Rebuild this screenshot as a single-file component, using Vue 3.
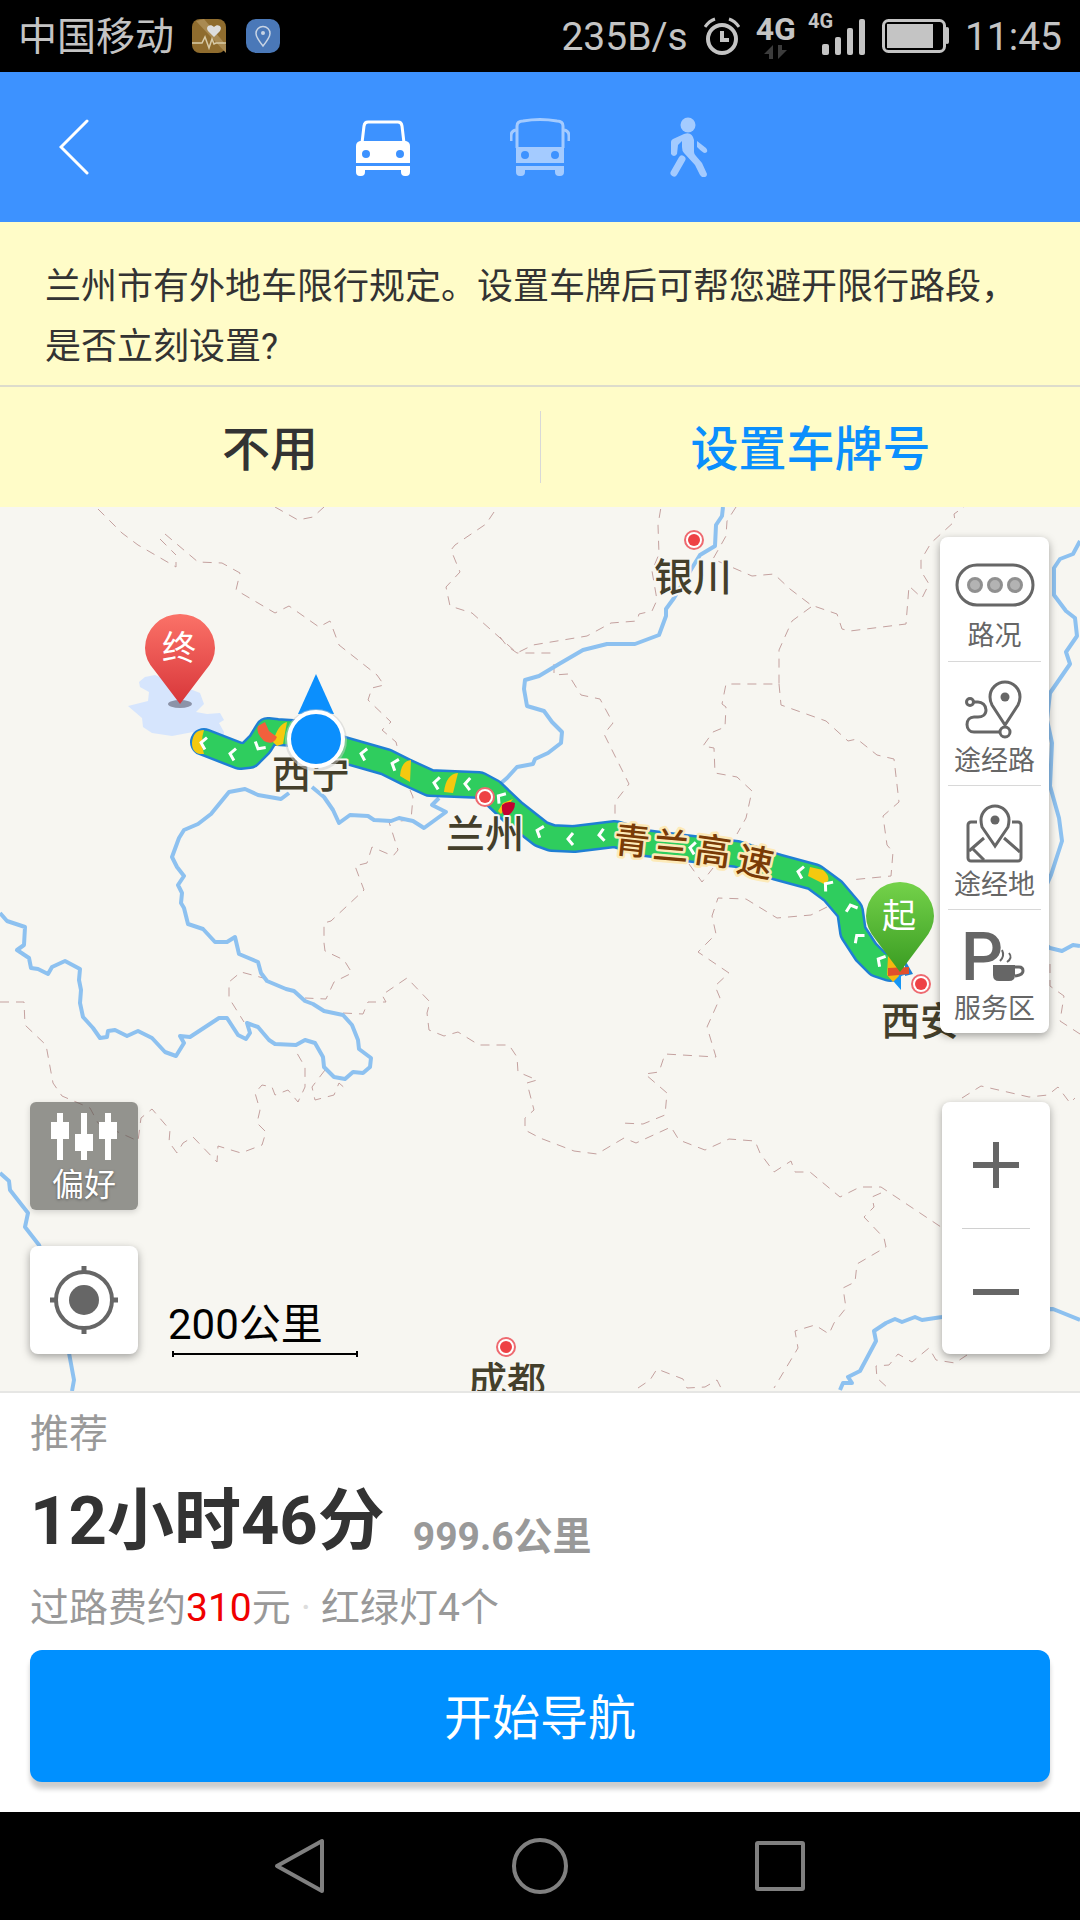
<script setup>
import { ref } from 'vue';

const mode = ref('car');

// Sông
const rivers = [
    '289,793 281,799 258,795 245,789 229,792 211,814 198,824 184,830 179,838 172,857 177,867 184,876 178,885 182,893 181,903 184,908 188,924 203,929 215,942 227,942 235,937 239,954 258,962 261,973 267,981 286,989 294,991 305,1001 313,1004 324,1011 343,1015 352,1025 358,1040 359,1049 371,1058 370,1067 363,1073 353,1072 345,1079 334,1077 324,1067 323,1057 315,1043 305,1040 296,1045 275,1044 269,1040 258,1027 247,1023 250,1033 246,1039 238,1035 227,1018 219,1018 190,1037 180,1036 184,1043 176,1056 165,1052 152,1038 138,1031 127,1036 115,1030 108,1031 107,1037 100,1038 93,1028 83,1017 80,1003 81,990 79,980 80,969 65,961 52,967 48,974 38,969 31,968 29,958 17,950 24,945 25,927 7,921 0,913',
    '312,787 324,797 333,810 339,823 350,815 368,816 374,820 391,821 399,818 413,821 424,828 446,812 432,805 439,798',
    '500,784 507,778 517,767 533,764 535,759 548,753 561,743 562,732 552,722 544,711 527,706 524,689 525,680 539,676 559,664 583,650 607,644 635,644 659,635 666,616 666,609 674,598 692,568 700,555 715,546 716,525 722,516 723,507',
    '1080,541 1073,554 1060,559 1054,568 1054,595 1066,611 1075,618 1077,636 1066,652 1070,664 1050,693 1047,720 1052,743 1050,786 1059,818 1062,841 1051,875 1040,900 1040,940 1050,948 1062,951 1073,945 1080,946',
    '840,1390 843,1383 852,1383 848,1377 860,1371 876,1341 874,1331 886,1323 895,1319 902,1322 915,1317 922,1320 942,1317 970,1310 1053,1309 1080,1320',
    '0,1173 9,1181 10,1190 28,1213 25,1227 39,1245 55,1290 69,1353 74,1380 72,1391',
];

// Ranh giới tỉnh
const borders = [
    '98,509 122,533 138,545 176,567 176,562',
    '160,539 176,555',
    '165,534 198,562 222,563 240,573 236,590 275,613 289,606 319,627 330,621 339,645 377,675 384,685 372,688 368,700 391,722 382,730 396,742 398,750',
    '410,790 413,797 411,820 389,822 398,850 393,856 372,847 367,863 355,866 364,890 331,921 324,923 324,943 325,951 344,960 352,973 334,982 326,999 305,998',
    '275,507 298,520 313,517 324,507',
    '494,512 486,524 455,545 451,550 460,572 446,587 450,606 472,613 517,653 533,645 587,636 611,623 637,621 639,614 652,611 657,600 652,571 659,554 658,525 661,507',
    '500,637 507,646 517,653 555,653',
    '554,664 554,675 568,674 581,695 600,699 613,723 604,734 629,784 615,802 615,818',
    '736,507 727,521 726,536 713,559 752,576 774,574 790,589 811,605 837,614 842,629 850,631 906,624 909,586 922,598 929,584 921,571 921,560 931,543 955,521 954,514 964,507',
    '811,607 792,621 779,650 779,684 726,684 722,704 726,707 725,727 713,732 703,746 714,748 715,773 737,777 752,791 746,818 737,834',
    '779,684 781,705 826,721 848,741 857,739 877,755 894,759 899,802 883,816 887,845 893,852 891,876 850,880',
    '827,907 811,915 777,918 746,899 718,898 712,916 716,934 698,952 729,973 715,986 720,998 707,1027 716,1057 665,1054 659,1072 645,1074 667,1093 665,1115 643,1124 621,1123',
    '689,864 702,882 713,868',
    '343,1013 363,1014 368,1002 386,1002 382,995 407,978 430,1002 427,1013 429,1030 444,1036 458,1032 479,1045 509,1045 517,1057 518,1072 537,1080 527,1083 534,1110 525,1118 525,1130 540,1138 574,1151 597,1154 624,1138 636,1143 671,1127 679,1140 705,1150 729,1139 755,1141 760,1153 774,1172 791,1161 795,1172 810,1172 840,1197 860,1187 881,1187 941,1227',
    '881,1193 872,1197 874,1207 864,1217 884,1238 886,1247 857,1264 855,1282 843,1288 846,1308 834,1323 829,1334 815,1325 795,1331 798,1348 774,1388',
    '638,1388 650,1380 657,1369 683,1379 687,1388 705,1387 717,1380 721,1388',
    '967,1355 955,1363 936,1360 929,1348 912,1362 898,1354 889,1365 876,1366 877,1378 889,1389',
    '962,1098 981,1086 1029,1097 1048,1095 1058,1087 1070,1103 1075,1098',
    '1050,964 1050,986 1064,996 1060,1021 1080,1034',
    '0,1002 24,1002 25,1025 46,1045 53,1083 62,1096 90,1108 98,1123 138,1141 141,1118 152,1109 170,1130 169,1142 177,1153 183,1143 193,1137 217,1162 218,1146 241,1153 262,1145 266,1132 257,1123 260,1110 255,1093 262,1085 272,1087 275,1095 288,1090 298,1102 305,1087 305,1067 294,1048',
    '325,1070 312,1087 315,1100 334,1095 339,1083 347,1090',
    '267,979 241,972 229,982 229,998 244,1022',
];

// Tuyến đường từ tây sang đông
const route = '204,742 240,756 249,755 260,744 268,731 277,732 293,733 344,750 386,762 406,772 430,783 479,785 492,792 513,812 541,834 552,838 574,839 615,834 645,843 685,848 737,854 777,867 814,877 833,891 850,911 853,932 866,952 878,964 890,968';

const arrows = [
    { x: 203, y: 743, r: 10 },
    { x: 232, y: 754, r: 10 },
    { x: 259, y: 747, r: -60 },
    { x: 363, y: 754, r: 12 },
    { x: 394, y: 764, r: 20 },
    { x: 436, y: 783, r: 8 },
    { x: 467, y: 784, r: 2 },
    { x: 500, y: 797, r: 35 },
    { x: 539, y: 831, r: 20 },
    { x: 570, y: 839, r: 0 },
    { x: 601, y: 835, r: -5 },
    { x: 692, y: 848, r: 8 },
    { x: 800, y: 872, r: 10 },
    { x: 827, y: 885, r: 38 },
    { x: 851, y: 907, r: 72 },
    { x: 858, y: 937, r: 50 },
    { x: 880, y: 960, r: 30 },
];

const cities = [
    { name: '银川', x: 693, y: 591, dotX: 694, dotY: 540 },
    { name: '西宁', x: 311, y: 788 },
    { name: '兰州', x: 485, y: 848, dotX: 485, dotY: 797 },
    { name: '西安', x: 920, y: 1035, dotX: 921, dotY: 984 },
    { name: '成都', x: 507, y: 1395, dotX: 506, dotY: 1347 },
];

const roadName = [
    { char: '青', x: 632, y: 842, r: 6 },
    { char: '兰', x: 671, y: 847, r: 5 },
    { char: '高', x: 713, y: 852, r: 8 },
    { char: '速', x: 755, y: 863, r: 12 },
];

const tools = [
    { key: 'traffic', label: '路况' },
    { key: 'roads', label: '途经路' },
    { key: 'places', label: '途经地' },
    { key: 'service', label: '服务区' },
];
</script>

<template>
    <div class="screen">
        <div class="status-bar">
            <div class="status-left">
                <span>中国移动</span>
                <svg class="app-icon" viewBox="0 0 34 34">
                    <rect width="34" height="34" rx="8" fill="#8f6c2e" />
                    <path d="M4 2L34 34V26L12 0z" fill="#a98a52" />
                    <path d="M22 18l-6-6c-3-4 2-8 6-4 4-4 9 0 6 4z" fill="#ddd" />
                    <path d="M0 24h10l3-6 4 11 3-9 2 5 2-1h10" fill="none" stroke="#d8cba8" stroke-width="1.5" />
                </svg>
                <svg class="app-icon" viewBox="0 0 34 34">
                    <rect width="34" height="34" rx="10" fill="#4a78b8" />
                    <path d="M17 27c-4-5-7-9-7-12.5a7 7 0 0 1 14 0c0 3.5-3 7.5-7 12.5z" fill="none" stroke="#c8d4e4" stroke-width="1.5" />
                    <circle cx="17" cy="14" r="2" fill="#c8d4e4" />
                </svg>
            </div>
            <div class="status-right">
                <span>235B/s</span>
                <svg class="alarm" viewBox="0 0 36 38">
                    <g fill="none" stroke="#c4c4c4">
                        <circle cx="18" cy="22" r="14" stroke-width="4" />
                        <path d="M18 14v9h7" stroke-width="4" />
                        <path d="M1 10Q5 4 11 2M35 10Q31 4 25 2" stroke-width="3" />
                    </g>
                </svg>
                <div class="mobile-data">
                    <span class="data-type">4G</span>
                    <svg viewBox="0 0 24 14" class="data-arrows">
                        <path d="M9 0v14H5V9H0zM14 14V0h4v5h5z" fill="#3c3c3c" />
                    </svg>
                </div>
                <svg class="signal" viewBox="0 0 58 50">
                    <text x="0" y="20" class="signal-type">4G</text>
                    <g fill="#c4c4c4">
                        <rect x="14" y="36" width="7" height="11" rx="2" />
                        <rect x="27" y="29" width="6" height="18" rx="2" />
                        <rect x="39" y="20" width="6" height="27" rx="2" />
                        <rect x="51" y="11" width="6" height="36" rx="2" />
                    </g>
                </svg>
                <svg class="battery" viewBox="0 0 67 34">
                    <rect x="1.5" y="1.5" width="61" height="31" rx="5" fill="none" stroke="#c4c4c4" stroke-width="3" />
                    <rect x="5" y="5" width="46" height="24" fill="#c4c4c4" />
                    <rect x="63" y="8" width="4" height="17" rx="2" fill="#c4c4c4" />
                </svg>
                <span>11:45</span>
            </div>
        </div>

        <header class="header">
            <button type="button" class="icon-button back" aria-label="返回">
                <svg width="30" height="56" viewBox="0 0 30 56">
                    <path d="M28 2L2 28l26 26" fill="none" stroke="#fff" stroke-width="3" stroke-linecap="round" />
                </svg>
            </button>
            <nav class="modes">
                <button type="button" class="icon-button" :class="{ active: mode === 'car' }" aria-label="驾车" @click="mode = 'car'">
                    <svg width="54" height="60" viewBox="0 0 54 60">
                        <path d="M6 26L8 9q.5-4 4-4h30q3.500 0 4 4l2 17" fill="none" stroke="currentColor" stroke-width="3" />
                        <path fill="currentColor" fill-rule="evenodd" d="M4 24h46q4 1 4 5v17H0V29q0-4 4-5zM10 33a4 4 0 1 0 0 8 4 4 0 0 0 0-8zM44 33a4 4 0 1 0 0 8 4 4 0 0 0 0-8z" />
                        <path fill="currentColor" d="M0 49h54v6q0 4-4 4h-1q-4 0-4-4v-2H9v2q0 4-4 4H4q-4 0-4-4z" />
                    </svg>
                </button>
                <button type="button" class="icon-button" :class="{ active: mode === 'bus' }" aria-label="公交" @click="mode = 'bus'">
                    <svg width="60" height="60" viewBox="0 0 60 60">
                        <path d="M7 31V9q0-5 6-5 17-3 34 0 6 0 6 5v22" fill="none" stroke="currentColor" stroke-width="3" />
                        <path d="M1 24v-5q0-5 5-6M59 24v-5q0-5-5-6" fill="none" stroke="currentColor" stroke-width="3" />
                        <path fill="currentColor" fill-rule="evenodd" d="M6 30h48v16H6zM15 34a4 4 0 1 0 0 8 4 4 0 0 0 0-8zM45 34a4 4 0 1 0 0 8 4 4 0 0 0 0-8z" />
                        <path fill="currentColor" d="M6 49h48v6q0 4-4 4h-1q-4 0-4-4v-2H15v2q0 4-4 4h-1q-4 0-4-4z" />
                    </svg>
                </button>
                <button type="button" class="icon-button" :class="{ active: mode === 'walk' }" aria-label="步行" @click="mode = 'walk'">
                    <svg width="38" height="60" viewBox="0 0 38 60">
                        <circle cx="18" cy="8" r="7.5" fill="currentColor" />
                        <path fill="currentColor" d="M14 17q8-3 10 6v12q0 2 2 4l6 7 5 11q0 4-5 3l-2-2-5-10-11-12q-2-2-2-6v-6l-4 4-1 9q-3 4-6 0V25q0-2 2-3z" />
                        <path d="M12 42l-8 14" stroke="currentColor" stroke-width="7" stroke-linecap="round" />
                        <path fill="currentColor" d="M27 24l9 7q3 4-1 5-2 0-8-6z" />
                    </svg>
                </button>
            </nav>
        </header>

        <section class="notice">
            <p class="notice-text">兰州市有外地车限行规定。设置车牌后可帮您避开限行路段，是否立刻设置?</p>
            <div class="notice-actions">
                <button type="button" class="notice-button">不用</button>
                <button type="button" class="notice-button primary">设置车牌号</button>
            </div>
        </section>

        <main class="map">
            <svg class="map-canvas" viewBox="0 507 1080 884">
                <defs>
                    <linearGradient id="pinEnd" x1="0" y1="0" x2="0" y2="1">
                        <stop offset="0" stop-color="#fb7268" />
                        <stop offset="1" stop-color="#d8363a" />
                    </linearGradient>
                    <linearGradient id="pinStart" x1="0" y1="0" x2="0" y2="1">
                        <stop offset="0" stop-color="#74d24a" />
                        <stop offset="1" stop-color="#3a9c22" />
                    </linearGradient>
                </defs>

                <polygon class="lake" points="139,682 145,677 155,675 200,693 204,704 196,712 207,714 220,713 224,720 219,723 224,732 223,742 193,732 172,736 152,733 143,727 142,718 128,706 148,701 149,692 140,687" />
                <polyline v-for="(points, i) in borders" :key="'b' + i" class="border" :points="points" />
                <polyline v-for="(points, i) in rivers" :key="'r' + i" class="river" :points="points" />

                <polyline class="route-edge" :points="route" />
                <polyline class="route-line" :points="route" />

                <!-- Đoạn đường chậm / tắc -->
                <path fill="#f5c90f" d="M204 730q-4 12 0 24-12 1-12-11 1-13 12-13zM287 722q-9 2-14 20l4 4 6-2zM411 760q-10 1-11 16l10 6zM458 773q-12 1-14 19l9 1zM810 867l13 3q7 6 5 11l-4 3-16-8z" />
                <path fill="#f2603c" d="M265 722l4 9 8 6q-4 9-13 4-9-9-6-15z" />
                <path fill="#f5c90f" d="M503 803l10-4-12 15-3-3z" />
                <path fill="#c4032f" d="M502 805q5-5 13-2 0 9-9 14-5-3-4-12z" />
                <path
                    v-for="(arrow, i) in arrows"
                    :key="'a' + i"
                    class="arrow"
                    d="M3-6L-2 0l5 6"
                    :transform="`translate(${arrow.x} ${arrow.y}) rotate(${arrow.r})`"
                />
                <path fill="#1f7fd4" d="M905 960l8 14-8 2z" />
                <path fill="#1596f5" d="M888 975l13 15v-14l10-3z" />
                <path fill="#f5b80f" d="M888 956l6 2 5 18-6 6-6-7z" />
                <path fill="#e0502c" d="M888 968l21-1v7l-21 2z" />

                <text
                    v-for="item in roadName"
                    :key="item.char"
                    class="road-name"
                    :transform="`translate(${item.x} ${item.y}) rotate(${item.r})`"
                    y="12"
                >{{ item.char }}</text>

                <g v-for="city in cities" :key="city.name">
                    <g v-if="city.dotX">
                        <circle :cx="city.dotX" :cy="city.dotY" r="9" fill="#fff" stroke="#ee6a70" stroke-width="2" />
                        <circle :cx="city.dotX" :cy="city.dotY" r="6" fill="#ee4145" />
                    </g>
                    <text class="city" :x="city.x" :y="city.y">{{ city.name }}</text>
                </g>

                <!-- Vị trí hiện tại -->
                <path d="M316 674l18 40h-36z" fill="#0b8ffd" />
                <circle cx="316" cy="740" r="31" fill="#ccc" opacity=".5" />
                <circle cx="316" cy="739" r="27" fill="#0b8ffd" stroke="#fff" stroke-width="4" />

                <ellipse cx="180" cy="704" rx="12" ry="4" fill="#8c93a8" />
                <path d="M180 704L155 671Q145 660 145 648A35 34 0 0 1 215 648Q215 660 205 671z" fill="url(#pinEnd)" />
                <text class="pin-text" x="179" y="660">终</text>
                <path d="M900 972L876 940Q866 928 866 916A34 34 0 0 1 934 916Q934 928 924 940z" fill="url(#pinStart)" />
                <text class="pin-text" x="899" y="928">起</text>
            </svg>

            <div class="toolbar">
                <button v-for="tool in tools" :key="tool.key" type="button" class="tool">
                    <svg v-if="tool.key === 'traffic'" class="tool-icon" viewBox="0 0 80 60">
                        <rect x="2" y="11" width="76" height="40" rx="20" stroke-width="3" />
                        <g fill="#b3b3b3" stroke="#909090">
                            <circle cx="20" cy="31" r="6.5" />
                            <circle cx="40" cy="31" r="6.5" />
                            <circle cx="60" cy="31" r="6.5" />
                        </g>
                    </svg>
                    <svg v-else-if="tool.key === 'roads'" class="tool-icon" viewBox="0 0 80 60">
                        <circle cx="15" cy="23" r="3.5" />
                        <path d="M19 23h4c4 0 8 3 8 8s-4 7-8 7h-4c-4 0-7 3-7 7.5s3 7.5 7 7.5h26" />
                        <path d="M50 46L37 26Q35 22 35 18a15 15 0 0 1 30 0q0 4-2 8z" />
                        <circle cx="50" cy="18" r="4.5" fill="#666" stroke="none" />
                        <circle cx="50" cy="53" r="5" />
                    </svg>
                    <svg v-else-if="tool.key === 'places'" class="tool-icon" viewBox="0 0 80 60">
                        <path d="M22 19h-6a3 3 0 0 0-3 3v33a3 3 0 0 0 3 3h47a3 3 0 0 0 3-3V22a3 3 0 0 0-3-3h-6" />
                        <path d="M29 35L14 48M18 46l11 11M49 35l16 14" />
                        <path d="M40 43L27 24Q26 20 26 17a14 14 0 0 1 28 0q0 3-1 7z" />
                        <circle cx="40" cy="17" r="4.5" fill="#666" stroke="none" />
                    </svg>
                    <svg v-else class="tool-icon" viewBox="0 0 80 60">
                        <text class="parking" x="6" y="53">P</text>
                        <path d="M38 38h22v10q0 6-6 6H44q-6 0-6-6z" fill="#666" stroke="none" />
                        <path d="M60 40h4q4 0 4 4t-8 5" />
                        <path d="M45 34q5-5 2-11M52 35q6-4 2-9" stroke-width="2" />
                    </svg>
                    <span>{{ tool.label }}</span>
                </button>
            </div>

            <div class="zoom">
                <button type="button" class="zoom-button" aria-label="放大">
                    <svg width="46" height="46" viewBox="0 0 46 46"><path d="M23 0v46M0 23h46" stroke="#666" stroke-width="6" /></svg>
                </button>
                <button type="button" class="zoom-button" aria-label="缩小">
                    <svg width="46" height="46" viewBox="0 0 46 46"><path d="M0 23h46" stroke="#666" stroke-width="6" /></svg>
                </button>
            </div>

            <button type="button" class="preference">
                <svg width="68" height="48" viewBox="0 0 68 48">
                    <path fill="#fff" d="M7 0h6v9h6v17h-6v21H7V26H1V9h6zM31 0h6v21h6v17h-6v9h-6v-9h-6V21h6zM55 0h6v9h6v17h-6v21h-6V26h-6V9h6z" />
                </svg>
                <span>偏好</span>
            </button>

            <div class="map-bottom">
                <button type="button" class="locate" aria-label="定位">
                    <svg width="70" height="70" viewBox="0 0 70 70">
                        <circle cx="35" cy="35" r="28" fill="none" stroke="#666" stroke-width="4" />
                        <circle cx="35" cy="35" r="15" fill="#666" />
                        <path d="M35 1v8M35 61v8M1 35h8M61 35h8" stroke="#666" stroke-width="5" />
                    </svg>
                </button>
                <div class="scale">
                    <span>200公里</span>
                    <div class="scale-line"></div>
                </div>
            </div>
        </main>

        <section class="panel">
            <div class="panel-tag">推荐</div>
            <div class="summary">
                <strong class="duration">12小时46分</strong>
                <strong class="distance">999.6公里</strong>
            </div>
            <div class="detail">过路费约<span class="price">310</span>元<span class="dot">·</span>红绿灯4个</div>
            <button type="button" class="start">开始导航</button>
        </section>

        <nav class="nav-bar">
            <button type="button" class="nav-button" aria-label="返回">
                <svg width="60" height="60" viewBox="0 0 60 60"><path d="M52 5v50L7 30z" /></svg>
            </button>
            <button type="button" class="nav-button" aria-label="主页">
                <svg width="60" height="60" viewBox="0 0 60 60"><circle cx="30" cy="30" r="26" /></svg>
            </button>
            <button type="button" class="nav-button" aria-label="最近任务">
                <svg width="60" height="60" viewBox="0 0 60 60"><rect x="7" y="7" width="46" height="46" rx="1" /></svg>
            </button>
        </nav>
    </div>
</template>

<style>
body {
    margin: 0;
    background: #000;
}
</style>

<style scoped>
.screen {
    font-family: Roboto, "Noto Sans CJK SC", sans-serif;
    color: #333;
    background: #fff;
}

button {
    padding: 0;
    border: 0;
    background: none;
    font: inherit;
    color: inherit;
    cursor: pointer;
}

svg {
    display: block;
}

.status-bar {
    display: flex;
    justify-content: space-between;
    align-items: center;
    height: 72px;
    padding: 0 18px;
    background: #000;
    color: #c4c4c4;
    font-size: 39px;
    line-height: 72px;
}

.status-left,
.status-right {
    display: flex;
    align-items: center;
}

.status-left {
    gap: 18px;
}

.status-left span {
    padding-top: 2px;
}

.app-icon {
    width: 34px;
    height: 34px;
}

.app-icon + .app-icon {
    margin-left: 2px;
}

.status-right {
    gap: 16px;
}

.status-right span {
    padding-top: 2px;
}

.alarm {
    width: 36px;
    height: 38px;
}

.mobile-data {
    display: flex;
    flex-direction: column;
    align-items: center;
    gap: 2px;
    margin-right: -4px;
}

.data-type {
    font-size: 32px;
    line-height: 28px;
    font-weight: 700;
}

.data-arrows {
    width: 24px;
    height: 14px;
}

.signal {
    width: 58px;
    height: 50px;
    margin-bottom: 6px;
}

.signal-type {
    fill: #c4c4c4;
    font-size: 20px;
    font-weight: 700;
}

.battery {
    width: 67px;
    height: 34px;
}

.header {
    display: grid;
    grid-template-columns: 1fr auto 1fr;
    align-items: center;
    height: 150px;
    padding: 0 60px 0 44px;
    box-sizing: border-box;
    background: #3d92ff;
}

.icon-button {
    color: #a4cbff;
}

.icon-button.active {
    color: #fff;
}

.back {
    justify-self: start;
    padding: 15px;
}

.modes {
    display: flex;
    gap: 100px;
}

.notice {
    background: #fffcc8;
}

.notice-text {
    margin: 0;
    padding: 35px 45px 8px;
    font-size: 36px;
    line-height: 60px;
    border-bottom: 2px solid #dddccc;
}

.notice-actions {
    display: grid;
    grid-template-columns: 1fr 1fr;
    padding: 24px 0;
}

.notice-button {
    padding-top: 6px;
    font-size: 48px;
    font-weight: 500;
    line-height: 66px;
}

.notice-button.primary {
    color: #0b8ffd;
    border-left: 1px solid #d8d8d8;
}

.map {
    position: relative;
    overflow: hidden;
    background: #f7f6f1;
}

.map-canvas {
    width: 100%;
    height: auto;
}

.lake {
    fill: #d6e5fd;
}

.river {
    fill: none;
    stroke: #8dc1f0;
    stroke-width: 4;
    stroke-linejoin: round;
}

.border {
    fill: none;
    stroke: #c4a19f;
    stroke-width: 1;
    stroke-dasharray: 9 7;
}

.route-edge,
.route-line {
    fill: none;
    stroke-linejoin: round;
    stroke-linecap: round;
}

.route-edge {
    stroke: #1f7fd4;
    stroke-width: 28;
}

.route-line {
    stroke: #2fcd5e;
    stroke-width: 23;
}

.arrow {
    fill: none;
    stroke: #fff;
    stroke-width: 3;
}

.city,
.road-name {
    text-anchor: middle;
    paint-order: stroke;
    stroke-linejoin: round;
}

.city {
    font-size: 39px;
    font-weight: 500;
    fill: #443f2b;
    stroke: #f7f6f1;
    stroke-width: 4;
}

.road-name {
    font-size: 36px;
    font-weight: 500;
    fill: #7a3b06;
    stroke: #fdeab8;
    stroke-width: 5;
}

.pin-text {
    fill: #fff;
    font-size: 34px;
    text-anchor: middle;
}

.toolbar,
.zoom,
.locate {
    background: #fff;
    border-radius: 8px;
    box-shadow: 0 3px 8px rgba(0, 0, 0, 0.35);
}

.toolbar {
    position: absolute;
    top: 30px;
    right: 31px;
    width: 109px;
    padding: 0 8px;
    box-sizing: border-box;
}

.tool {
    display: flex;
    flex-direction: column;
    align-items: center;
    gap: 4px;
    width: 100%;
    height: 124px;
    padding-top: 17px;
    color: #666;
    font-size: 27px;
    line-height: 36px;
    white-space: nowrap;
}

.tool + .tool {
    border-top: 1px solid #d8d8d8;
}

.tool-icon {
    width: 80px;
    height: 60px;
    fill: none;
    stroke: #666;
    stroke-width: 3;
}

.parking {
    fill: #666;
    stroke: none;
    font-size: 66px;
    font-weight: 500;
}

.zoom {
    position: absolute;
    right: 30px;
    bottom: 37px;
    width: 108px;
    padding: 0 20px;
    box-sizing: border-box;
}

.zoom-button {
    display: flex;
    align-items: center;
    justify-content: center;
    width: 100%;
    height: 126px;
}

.zoom-button + .zoom-button {
    border-top: 1px solid #d0d0d0;
}

.preference {
    position: absolute;
    left: 30px;
    bottom: 181px;
    display: flex;
    flex-direction: column;
    align-items: center;
    gap: 4px;
    width: 108px;
    height: 108px;
    padding-top: 11px;
    border-radius: 6px;
    background: rgba(85, 85, 80, 0.62);
    box-shadow: 0 2px 6px rgba(0, 0, 0, 0.15);
    color: #fff;
    font-size: 32px;
    line-height: 40px;
    text-shadow: 0 1px 3px rgba(0, 0, 0, 0.4);
}

.map-bottom {
    position: absolute;
    left: 30px;
    bottom: 37px;
    display: flex;
    align-items: flex-end;
    gap: 30px;
}

.locate {
    display: flex;
    align-items: center;
    justify-content: center;
    width: 108px;
    height: 108px;
}

.scale {
    margin-bottom: -3px;
    color: #000;
    font-size: 42px;
    line-height: 52px;
}

.scale-line {
    width: 182px;
    height: 6px;
    margin-left: 4px;
    border: solid #000;
    border-width: 0 2px;
    background: linear-gradient(#000, #000) center / 100% 2px no-repeat;
}

.panel {
    padding: 17px 30px 30px;
    border-top: 2px solid #e6e6e4;
    color: #999;
    font-size: 39px;
    line-height: 48px;
}

.summary {
    display: flex;
    align-items: flex-end;
    gap: 28px;
    margin-top: 23px;
}

.duration {
    color: #333;
    font-size: 67px;
    line-height: 80px;
}

.distance {
    font-size: 39px;
    line-height: 48px;
}

.detail {
    margin-top: 23px;
}

.price {
    color: #f00000;
}

.dot {
    margin: 0 10px;
    color: #ddd;
}

.start {
    display: block;
    width: 100%;
    height: 132px;
    margin-top: 18px;
    padding-top: 6px;
    border-radius: 12px;
    background: #0090ff;
    box-shadow: 0 7px 5px rgba(0, 0, 0, 0.2);
    color: #fff;
    font-size: 48px;
}

.nav-bar {
    display: flex;
    justify-content: center;
    gap: 180px;
    padding: 24px 0;
    background: #000;
}

.nav-button svg {
    fill: none;
    stroke: #808080;
    stroke-width: 4;
    stroke-linejoin: round;
}
</style>
